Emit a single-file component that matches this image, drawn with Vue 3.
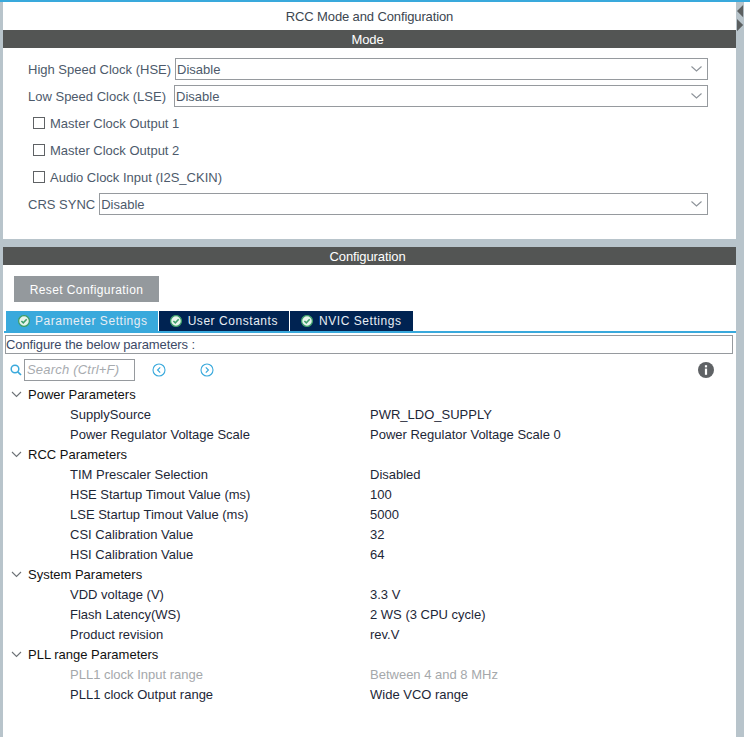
<script setup>
const modeChecks = ['Master Clock Output 1', 'Master Clock Output 2', 'Audio Clock Input (I2S_CKIN)']
const tabs = [
  { label: 'Parameter Settings', active: true },
  { label: 'User Constants', active: false },
  { label: 'NVIC Settings', active: false },
]
const groups = [
  { name: 'Power Parameters', rows: [
    ['SupplySource', 'PWR_LDO_SUPPLY'],
    ['Power Regulator Voltage Scale', 'Power Regulator Voltage Scale 0'],
  ] },
  { name: 'RCC Parameters', rows: [
    ['TIM Prescaler Selection', 'Disabled'],
    ['HSE Startup Timout Value (ms)', '100'],
    ['LSE Startup Timout Value (ms)', '5000'],
    ['CSI Calibration Value', '32'],
    ['HSI Calibration Value', '64'],
  ] },
  { name: 'System Parameters', rows: [
    ['VDD voltage (V)', '3.3 V'],
    ['Flash Latency(WS)', '2 WS (3 CPU cycle)'],
    ['Product revision', 'rev.V'],
  ] },
  { name: 'PLL range Parameters', rows: [
    ['PLL1 clock Input range', 'Between 4 and 8 MHz', true],
    ['PLL1 clock Output range', 'Wide VCO range'],
  ] },
]
</script>

<template>
  <div class="page">
    <div class="main">
      <section class="mode">
        <div class="title">RCC Mode and Configuration</div>
        <div class="bar">Mode</div>
        <div class="mode-body">
          <div class="field hse">
            <span class="lbl">High Speed Clock (HSE)</span>
            <div class="select"><span>Disable</span><svg class="chev" width="11" height="6" viewBox="0 0 11 6"><path d="M.5.5 5.500 5 10.500.5" fill="none" stroke="#8d9399" stroke-width="1.1"/></svg></div>
          </div>
          <div class="field lse">
            <span class="lbl">Low Speed Clock (LSE)</span>
            <div class="select"><span>Disable</span><svg class="chev" width="11" height="6" viewBox="0 0 11 6"><path d="M.5.5 5.500 5 10.500.5" fill="none" stroke="#8d9399" stroke-width="1.1"/></svg></div>
          </div>
          <label v-for="c in modeChecks" :key="c" class="check"><i class="box"></i><span>{{ c }}</span></label>
          <div class="field crs">
            <span class="lbl">CRS SYNC</span>
            <div class="select"><span>Disable</span><svg class="chev" width="11" height="6" viewBox="0 0 11 6"><path d="M.5.5 5.500 5 10.500.5" fill="none" stroke="#8d9399" stroke-width="1.1"/></svg></div>
          </div>
        </div>
      </section>
      <section class="config">
        <div class="bar">Configuration</div>
        <div class="reset-row"><button class="reset">Reset Configuration</button></div>
        <div class="tabs">
          <div v-for="t in tabs" :key="t.label" class="tab" :class="{ active: t.active }">
            <svg width="12" height="12" viewBox="0 0 12 12"><circle cx="6" cy="6" r="5.400" fill="#e8f4ec"/><circle cx="6" cy="6" r="5.400" fill="none" stroke="#3f9f6b" stroke-width="1.3"/><path d="M3.400 6 5.300 7.900 8.700 4.300" fill="none" stroke="#3f9f6b" stroke-width="1.6"/></svg>
            <span>{{ t.label }}</span>
          </div>
        </div>
        <div class="tab-line"></div>
        <div class="hint">Configure the below parameters :</div>
        <div class="tools">
          <svg class="lens" width="12" height="12" viewBox="0 0 12 12"><circle cx="5" cy="5" r="3.800" fill="none" stroke="#39a9dc" stroke-width="1.5"/><path d="M7.800 7.800 11 11" stroke="#39a9dc" stroke-width="1.7"/></svg>
          <div class="search">Search (Ctrl+F)</div>
          <svg class="nav first" width="14" height="14" viewBox="0 0 14 14"><circle cx="7" cy="7" r="6" fill="none" stroke="#39a9dc" stroke-width="1.1"/><path d="M8.200 4.400 5.600 7 8.200 9.600" fill="none" stroke="#39a9dc" stroke-width="1.2"/></svg>
          <svg class="nav" width="14" height="14" viewBox="0 0 14 14"><circle cx="7" cy="7" r="6" fill="none" stroke="#39a9dc" stroke-width="1.1"/><path d="M5.800 4.400 8.400 7 5.800 9.600" fill="none" stroke="#39a9dc" stroke-width="1.2"/></svg>
          <svg class="info" width="16" height="16" viewBox="0 0 16 16"><circle cx="8" cy="8" r="8" fill="#5f6265"/><rect x="6.900" y="6.600" width="2.200" height="6.200" fill="#fff"/><rect x="6.900" y="3.200" width="2.200" height="2.200" fill="#fff"/></svg>
        </div>
        <div class="tree">
          <template v-for="g in groups" :key="g.name">
            <div class="group"><svg width="11" height="7" viewBox="0 0 11 7"><path d="M1 1 5.500 5.500 10 1" fill="none" stroke="#6d7277" stroke-width="1.1"/></svg><span>{{ g.name }}</span></div>
            <div v-for="r in g.rows" :key="r[0]" class="row" :class="{ dim: r[2] }"><span>{{ r[0] }}</span><span>{{ r[1] }}</span></div>
          </template>
        </div>
      </section>
    </div>
    <div class="rail">
      <div class="arrows">
        <svg width="8" height="32" viewBox="0 0 8 32"><path d="M7 1V15L0 8ZM0 17 7 24 0 31Z" fill="#5b5f60"/></svg>
      </div>
    </div>
  </div>
</template>

<style>
html, body { margin: 0; background: #fff; }
</style>

<style scoped>
.page {
  width: 750px; height: 737px; box-sizing: border-box; overflow: hidden;
  display: flex; border-top: 2px solid #39a9dc; padding-left: 3px; padding-right: 6px;
  background: linear-gradient(#b8c4cb, #b8c4cb) left / 3px 100% no-repeat, #fff;
  font-family: "Liberation Sans", Arial, sans-serif; font-size: 13px; color: #16233a;
}
.main { width: 733px; display: flex; flex-direction: column; background: #b8c4cb; }
.rail { width: 8px; background: #b8c4cb; }
.arrows { display: flex; padding-left: 1px; line-height: 0; }
.mode { height: 237px; background: #fff; flex: none; }
.title { height: 28px; line-height: 29px; text-align: center; color: #3c4650; letter-spacing: -.12px; }
.bar { height: 18px; line-height: 19px; background: #535554; color: #fff; text-align: center; padding-right: 4px; letter-spacing: -.1px; }
.mode-body { padding: 10px 28px 0 25px; color: #4d5a6b; }
.lbl { flex: none; }
.field { display: flex; align-items: center; height: 22px; margin-bottom: 5px; }
.select {
  flex: 1; height: 22px; box-sizing: border-box; border: 1px solid #969a9e; display: flex; align-items: center;
  justify-content: space-between; padding: 0 5px 0 1px; margin-left: 4px; background: #fff;
}
.lse .select { margin-left: 8px; }
.check { display: flex; align-items: center; height: 22px; margin-bottom: 5px; padding-left: 5px; }
.box { width: 10px; height: 10px; border: 1px solid #5f6265; margin-right: 5px; flex: none; }
.config { flex: 1; background: #fff; margin-top: 8px; }
.reset-row { padding: 11px 0 0 11px; }
.reset { display: block; width: 145px; height: 26px; border: 0; background: #94999d; color: #fff; font-family: inherit; font-size: 12px; letter-spacing: .4px; padding: 1px 0 0; }
.tabs { display: flex; gap: 1px; margin: 9px 0 0 3px; }
.tab { height: 20px; display: flex; align-items: center; gap: 6px; padding: 0 11px; background: #002352; color: #e8eef4; font-size: 12px; letter-spacing: .55px; }
.tab.active { background: #39a9dc; gap: 5px; padding: 0 10px 0 12px; }
.tab-line { height: 2px; background: #39a9dc; margin-left: 1px; }
.hint { height: 19px; line-height: 18px; box-sizing: border-box; border: 1px solid #969a9e; margin: 2px 3px 0 2px; color: #3c4a66; white-space: nowrap; letter-spacing: -.1px; }
.tools { height: 30px; box-sizing: border-box; padding: 2px 0 0 7px; display: flex; align-items: center; }
.lens { margin-right: 2px; }
.search { width: 111px; height: 22px; line-height: 20px; box-sizing: border-box; border: 1px solid #969a9e; padding-left: 2px; font-style: italic; color: #a7abaf; white-space: nowrap; letter-spacing: .2px; }
.nav.first { margin-left: 17px; margin-right: 34px; }
.info { margin-left: auto; margin-right: 22px; }
.group { height: 20px; display: flex; align-items: center; color: #111; padding-left: 8px; }
.group svg { margin-right: 6px; }
.row { height: 20px; display: grid; grid-template-columns: 300px 1fr; align-items: center; padding-left: 67px; color: #1d2737; }
.dim { color: #a5a8ab; }
</style>
